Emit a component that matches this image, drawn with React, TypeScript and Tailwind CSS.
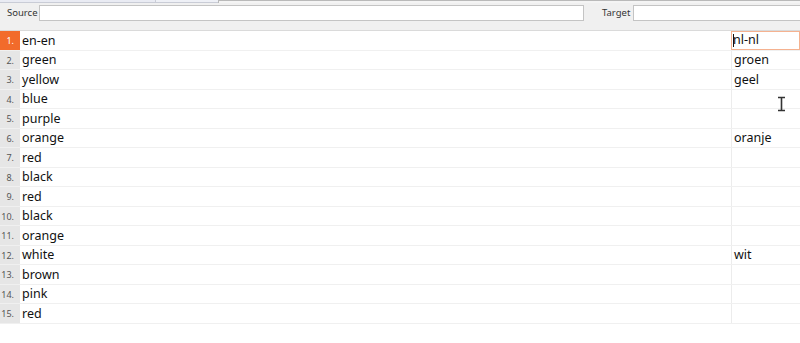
import React from "react";

const rows: [string, string][] = [
  ["en-en", "nl-nl"],
  ["green", "groen"],
  ["yellow", "geel"],
  ["blue", ""],
  ["purple", ""],
  ["orange", "oranje"],
  ["red", ""],
  ["black", ""],
  ["red", ""],
  ["black", ""],
  ["orange", ""],
  ["white", "wit"],
  ["brown", ""],
  ["pink", ""],
  ["red", ""],
];

export default function App() {
  return (
    <div
      className="relative w-[800px] h-[343px] overflow-hidden bg-white"
      style={{ fontFamily: '"Noto Sans", "Open Sans", sans-serif' }}
    >
      {/* top tab strip */}
      <div className="flex h-[3px]">
        <div className="w-[155px] bg-[#e9ebf3] border-b border-[#c9ccd6]"></div>
        <div className="w-[63px] bg-[#eef0f6] border-l border-b border-[#c9ccd6]"></div>
        <div className="flex-1 bg-[#f4f4f4] border-l border-t border-[#b9b9b9]"></div>
      </div>
      {/* toolbar */}
      <div className="flex h-[28px] items-start bg-[#f0f0f0] border-b border-[#dadada] pt-[2px]">
        <div className="flex items-center h-[16px] pl-[7px]">
          <span className="w-[32px] text-[9.5px] leading-none text-[#333]">Source</span>
          <div className="w-[545px] h-[16px] bg-white border border-[#c4c4c4]"></div>
        </div>
        <div className="flex items-center h-[16px] ml-[18px]">
          <span className="w-[31px] text-[9.5px] leading-none text-[#333]">Target</span>
          <div className="w-[200px] h-[16px] bg-white border border-[#c4c4c4]"></div>
        </div>
      </div>
      {/* grid */}
      <div className="flex flex-col">
        {rows.map(([src, tgt], i) => (
          <div key={i} className="flex h-[19.5px] border-b border-[#f0f0f0]">
            <div
              className={
                i === 0
                  ? "w-[20px] shrink-0 flex items-center justify-end pr-[6px] pt-[1px] bg-[#f26b2b] text-white text-[9px]"
                  : "w-[20px] shrink-0 flex items-center justify-end pr-[6px] pt-[1px] bg-[#e6e6e6] text-[#555] text-[9px]"
              }
            >
              {i + 1}.
            </div>
            <div className="w-[711px] shrink-0 flex items-center pl-[2px] pt-[2px] text-[12.5px] text-[#111]">
              {src}
            </div>
            {i === 0 ? (
              <div className="flex-1 flex bg-[#f5b290] p-px">
                <div className="flex-1 flex items-center bg-white pl-px text-[12.5px] text-[#111]">
                  <span className="w-px h-[13px] bg-[#111]"></span>
                  <span className="-ml-px">{tgt}</span>
                </div>
              </div>
            ) : (
              <div className="flex-1 flex items-center pl-[2px] pt-[2px] text-[12.5px] text-[#111] border-l border-[#ececec]">
                {tgt}
              </div>
            )}
          </div>
        ))}
      </div>
      {/* mouse I-beam cursor */}
      <svg
        className="absolute left-[777px] top-[96px]"
        width="9"
        height="16"
        viewBox="0 0 9 16"
      >
        <path d="M1 1.5h7M1 14.5h7M4.5 1.5v13" stroke="#333" strokeWidth="1.6" fill="none" />
      </svg>
    </div>
  );
}
